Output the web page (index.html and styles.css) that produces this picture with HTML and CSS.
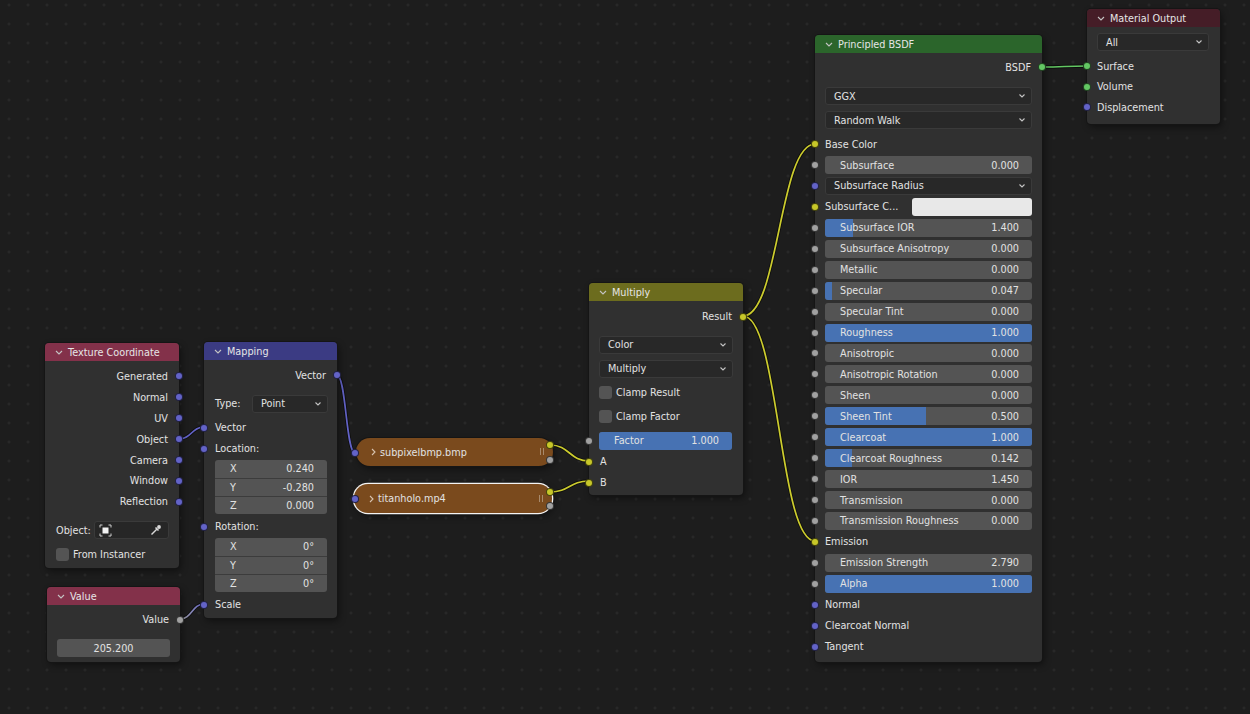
FILE: index.html
```html
<!DOCTYPE html>
<html>
<head>
    <title>Shader Editor</title>
    <meta charset="utf-8">
    <link rel="stylesheet" href="styles.css">
</head>
<body>
<div class="editor">

    <!-- links between sockets -->
    <svg class="wires" width="1250" height="714" viewBox="0 0 1250 714">
        <defs>
            <linearGradient id="grey2vec" gradientUnits="userSpaceOnUse" x1="180" y1="0" x2="204" y2="0">
                <stop offset="0" stop-color="#a1a1a1"/>
                <stop offset="1" stop-color="#6363c7"/>
            </linearGradient>
        </defs>
        <g class="shade">
            <path d="M179 439 C191.5 439 191.5 427 204 427"/>
            <path d="M180 619 C192 619 192 604 204 604"/>
            <path d="M337 375 C346 375 346 453 355 453"/>
            <path d="M550 445 C569.5 445 569.5 461 589 461"/>
            <path d="M550 492 C569.5 492 569.5 481 589 481"/>
            <path d="M743 316 C779 316 779 144 815 144"/>
            <path d="M743 316 C779 316 779 541 815 541"/>
            <path d="M1042 67 C1064.5 67 1064.5 66 1087 66"/>
        </g>
        <g class="link">
            <path class="w-vec" d="M179 439 C191.5 439 191.5 427 204 427"/>
            <path stroke="url(#grey2vec)" d="M180 619 C192 619 192 604 204 604"/>
            <path class="w-vec" d="M337 375 C346 375 346 453 355 453"/>
            <path class="w-col" d="M550 445 C569.5 445 569.5 461 589 461"/>
            <path class="w-col" d="M550 492 C569.5 492 569.5 481 589 481"/>
            <path class="w-col" d="M743 316 C779 316 779 144 815 144"/>
            <path class="w-col" d="M743 316 C779 316 779 541 815 541"/>
            <path class="w-shader" d="M1042 67 C1064.5 67 1064.5 66 1087 66"/>
        </g>
    </svg>

    <!-- Texture Coordinate -->
    <div class="node n-texcoord">
        <div class="hdr h-input"><svg class="chev" width="8" height="5" viewBox="0 0 8 5"><path d="M1 1l3 3 3-3"/></svg>Texture Coordinate</div>
        <div class="body">
            <div class="row out">Generated<i class="sock vec r"></i></div>
            <div class="row out">Normal<i class="sock vec r"></i></div>
            <div class="row out">UV<i class="sock vec r"></i></div>
            <div class="row out">Object<i class="sock vec r"></i></div>
            <div class="row out">Camera<i class="sock vec r"></i></div>
            <div class="row out">Window<i class="sock vec r"></i></div>
            <div class="row out">Reflection<i class="sock vec r"></i></div>
            <div class="row tall obj-row">
                <span class="obj-lbl">Object:</span>
                <div class="objfield">
                    <svg width="13" height="13" viewBox="0 0 13 13"><rect x="3.5" y="3.5" width="6" height="6" fill="#f2f2f2"/><path d="M1 3.5V1h2.5M9.5 1H12v2.5M12 9.5V12H9.5M3.5 12H1V9.5" stroke="#cfcfcf" fill="none"/></svg>
                    <svg width="12" height="12" viewBox="0 0 12 12"><path d="M1.5 10.5L7 5" stroke="#d8d8d8" stroke-width="1.4" fill="none"/><path d="M5.5 3.5l3 3" stroke="#d8d8d8" stroke-width="1.6"/><circle cx="9" cy="3" r="1.9" fill="#d8d8d8"/></svg>
                </div>
            </div>
            <div class="row tall"><span class="check"></span>From Instancer</div>
        </div>
    </div>

    <!-- Value -->
    <div class="node n-value">
        <div class="hdr h-input"><svg class="chev" width="8" height="5" viewBox="0 0 8 5"><path d="M1 1l3 3 3-3"/></svg>Value</div>
        <div class="body">
            <div class="row out">Value<i class="sock float r"></i></div>
            <div class="row tall value-row"><div class="field centered">205.200</div></div>
        </div>
    </div>

    <!-- Mapping -->
    <div class="node n-mapping">
        <div class="hdr h-vector"><svg class="chev" width="8" height="5" viewBox="0 0 8 5"><path d="M1 1l3 3 3-3"/></svg>Mapping</div>
        <div class="body">
            <div class="row out">Vector<i class="sock vec r"></i></div>
            <div class="row tall type-row">
                <span class="type-lbl">Type:</span>
                <div class="menu">Point<svg class="dd" width="6" height="4" viewBox="0 0 6 4"><path d="M0.5 0.5l2.5 2.5 2.5-2.5"/></svg></div>
            </div>
            <div class="row in vec-in">Vector<i class="sock vec l"></i></div>
            <div class="row in">Location:<i class="sock vec l"></i></div>
            <div class="xyz">
                <div class="field"><span>X</span><span>0.240</span></div>
                <div class="field"><span>Y</span><span>-0.280</span></div>
                <div class="field"><span>Z</span><span>0.000</span></div>
            </div>
            <div class="row in gap-top">Rotation:<i class="sock vec l"></i></div>
            <div class="xyz">
                <div class="field"><span>X</span><span>0°</span></div>
                <div class="field"><span>Y</span><span>0°</span></div>
                <div class="field"><span>Z</span><span>0°</span></div>
            </div>
            <div class="row in gap-top">Scale<i class="sock vec l"></i></div>
        </div>
    </div>

    <!-- collapsed image textures -->
    <div class="node pill n-img1">
        <svg class="chev-r" width="5" height="8" viewBox="0 0 5 8"><path d="M1 1l3 3-3 3"/></svg>
        <span>subpixelbmp.bmp</span>
        <span class="grip"></span>
        <i class="sock vec in-s"></i>
        <i class="sock col out-a"></i>
        <i class="sock float out-b"></i>
    </div>
    <div class="node pill selected n-img2">
        <svg class="chev-r" width="5" height="8" viewBox="0 0 5 8"><path d="M1 1l3 3-3 3"/></svg>
        <span>titanholo.mp4</span>
        <span class="grip"></span>
        <i class="sock vec in-s"></i>
        <i class="sock col out-a"></i>
        <i class="sock float out-b"></i>
    </div>

    <!-- Multiply -->
    <div class="node n-mix">
        <div class="hdr h-color"><svg class="chev" width="8" height="5" viewBox="0 0 8 5"><path d="M1 1l3 3 3-3"/></svg>Multiply</div>
        <div class="body">
            <div class="row out">Result<i class="sock col r"></i></div>
            <div class="row tall menu-first"><div class="menu">Color<svg class="dd" width="6" height="4" viewBox="0 0 6 4"><path d="M0.5 0.5l2.5 2.5 2.5-2.5"/></svg></div></div>
            <div class="row tall"><div class="menu">Multiply<svg class="dd" width="6" height="4" viewBox="0 0 6 4"><path d="M0.5 0.5l2.5 2.5 2.5-2.5"/></svg></div></div>
            <div class="row tall"><span class="check"></span>Clamp Result</div>
            <div class="row tall"><span class="check"></span>Clamp Factor</div>
            <div class="row factor-row"><div class="field"><b class="fill" style="width:100%"></b><span>Factor</span><span>1.000</span></div><i class="sock float l"></i></div>
            <div class="row in">A<i class="sock col l"></i></div>
            <div class="row in">B<i class="sock col l"></i></div>
        </div>
    </div>

    <!-- Principled BSDF -->
    <div class="node n-bsdf">
        <div class="hdr h-shader"><svg class="chev" width="8" height="5" viewBox="0 0 8 5"><path d="M1 1l3 3 3-3"/></svg>Principled BSDF</div>
        <div class="body">
            <div class="row out">BSDF<i class="sock shader r"></i></div>
            <div class="row tall menu-first"><div class="menu">GGX<svg class="dd" width="6" height="4" viewBox="0 0 6 4"><path d="M0.5 0.5l2.5 2.5 2.5-2.5"/></svg></div></div>
            <div class="row tall"><div class="menu">Random Walk<svg class="dd" width="6" height="4" viewBox="0 0 6 4"><path d="M0.5 0.5l2.5 2.5 2.5-2.5"/></svg></div></div>
            <div class="row in base-row">Base Color<i class="sock col l"></i></div>
            <div class="row"><div class="field"><span>Subsurface</span><span>0.000</span></div><i class="sock float l"></i></div>
            <div class="row"><div class="menu">Subsurface Radius<svg class="dd" width="6" height="4" viewBox="0 0 6 4"><path d="M0.5 0.5l2.5 2.5 2.5-2.5"/></svg></div><i class="sock vec l"></i></div>
            <div class="row in"><span class="swatch-lbl">Subsurface C...</span><div class="swatch"></div><i class="sock col l"></i></div>
            <div class="row"><div class="field"><b class="fill" style="width:13.5%"></b><span>Subsurface IOR</span><span>1.400</span></div><i class="sock float l"></i></div>
            <div class="row"><div class="field"><span>Subsurface Anisotropy</span><span>0.000</span></div><i class="sock float l"></i></div>
            <div class="row"><div class="field"><span>Metallic</span><span>0.000</span></div><i class="sock float l"></i></div>
            <div class="row"><div class="field"><b class="fill" style="width:3.5%"></b><span>Specular</span><span>0.047</span></div><i class="sock float l"></i></div>
            <div class="row"><div class="field"><span>Specular Tint</span><span>0.000</span></div><i class="sock float l"></i></div>
            <div class="row"><div class="field"><b class="fill" style="width:100%"></b><span>Roughness</span><span>1.000</span></div><i class="sock float l"></i></div>
            <div class="row"><div class="field"><span>Anisotropic</span><span>0.000</span></div><i class="sock float l"></i></div>
            <div class="row"><div class="field"><span>Anisotropic Rotation</span><span>0.000</span></div><i class="sock float l"></i></div>
            <div class="row"><div class="field"><span>Sheen</span><span>0.000</span></div><i class="sock float l"></i></div>
            <div class="row"><div class="field"><b class="fill" style="width:49%"></b><span>Sheen Tint</span><span>0.500</span></div><i class="sock float l"></i></div>
            <div class="row"><div class="field"><b class="fill" style="width:100%"></b><span>Clearcoat</span><span>1.000</span></div><i class="sock float l"></i></div>
            <div class="row"><div class="field"><b class="fill" style="width:13%"></b><span>Clearcoat Roughness</span><span>0.142</span></div><i class="sock float l"></i></div>
            <div class="row"><div class="field"><span>IOR</span><span>1.450</span></div><i class="sock float l"></i></div>
            <div class="row"><div class="field"><span>Transmission</span><span>0.000</span></div><i class="sock float l"></i></div>
            <div class="row"><div class="field"><span>Transmission Roughness</span><span>0.000</span></div><i class="sock float l"></i></div>
            <div class="row in">Emission<i class="sock col l"></i></div>
            <div class="row"><div class="field"><span>Emission Strength</span><span>2.790</span></div><i class="sock float l"></i></div>
            <div class="row"><div class="field"><b class="fill" style="width:100%"></b><span>Alpha</span><span>1.000</span></div><i class="sock float l"></i></div>
            <div class="row in">Normal<i class="sock vec l"></i></div>
            <div class="row in">Clearcoat Normal<i class="sock vec l"></i></div>
            <div class="row in">Tangent<i class="sock vec l"></i></div>
        </div>
    </div>

    <!-- Material Output -->
    <div class="node n-output">
        <div class="hdr h-output"><svg class="chev" width="8" height="5" viewBox="0 0 8 5"><path d="M1 1l3 3 3-3"/></svg>Material Output</div>
        <div class="body">
            <div class="row tall"><div class="menu">All<svg class="dd" width="6" height="4" viewBox="0 0 6 4"><path d="M0.5 0.5l2.5 2.5 2.5-2.5"/></svg></div></div>
            <div class="row in out-row first">Surface<i class="sock shader l"></i></div>
            <div class="row in out-row">Volume<i class="sock shader l"></i></div>
            <div class="row in out-row">Displacement<i class="sock vec l"></i></div>
        </div>
    </div>

</div>
</body>
</html>
```

FILE: styles.css
```css
:root {
    --body: #303030;
    --field: #545454;
    --menu: #282828;
    --slider: #4772b3;
    --text: #e2e2e2;
}

body {
    margin: 0;
    background-color: #1d1d1d;
    color: var(--text);
    font-family: "DejaVu Sans", sans-serif;
    font-size: 9.7px;
}

.editor {
    position: relative;
    width: 1250px;
    height: 714px;
    overflow: hidden;
    background-color: #1d1d1d;
    background-image: radial-gradient(circle, #2d2d2d 0.9px, transparent 1.5px);
    background-size: 19px 19px;
    background-position: -0.5px -4.5px;
}

/* wires */
.wires {
    position: absolute;
    left: 0;
    top: 0;
}
.wires path {
    fill: none;
}
.shade path {
    stroke: rgba(0, 0, 0, 0.55);
    stroke-width: 3.4;
}
.link path {
    stroke-width: 1.7;
}
.w-vec { stroke: #6363c7; }
.w-col { stroke: #cccc2e; }
.w-shader { stroke: #63c763; }

/* nodes */
.node {
    position: absolute;
    display: flex;
    flex-direction: column;
    background: var(--body);
    border-radius: 4px;
    box-shadow: 0 0 0 1px #151515, 2px 3px 7px rgba(0, 0, 0, 0.45);
}
.hdr {
    flex: none;
    height: 18px;
    display: flex;
    align-items: center;
    gap: 5px;
    padding-left: 10px;
    border-radius: 4px 4px 0 0;
    color: #e6e6e6;
}
.chev path, .chev-r path, .dd path {
    fill: none;
    stroke: #c4c4c4;
    stroke-width: 1.1;
}
.h-input { background: #83314a; }
.h-vector { background: #3b3b83; }
.h-color { background: #6c6c1e; }
.h-shader { background: #2b652b; }
.h-output { background: #451d27; }

.body {
    display: flex;
    flex-direction: column;
}

.row {
    position: relative;
    flex: none;
    height: 20.9px;
    display: flex;
    align-items: center;
    padding: 0 10px;
}
.row.tall {
    height: 24px;
}
.row.out {
    justify-content: flex-end;
    padding-right: 11px;
}
.row.in {
    padding-left: 11px;
}

/* sockets */
.sock {
    position: absolute;
    top: 50%;
    width: 6px;
    height: 6px;
    margin-top: -4px;
    border-radius: 50%;
    border: 1px solid rgba(0, 0, 0, 0.65);
}
.sock.r { right: -4px; }
.sock.l { left: -4px; }
.vec { background: #6363c7; }
.float { background: #a1a1a1; }
.col { background: #c7c729; }
.shader { background: #63c763; }

/* widgets */
.field {
    position: relative;
    flex: 1;
    height: 18px;
    display: flex;
    align-items: center;
    justify-content: space-between;
    padding: 0 13px 0 15px;
    background: var(--field);
    border-radius: 3px;
    overflow: hidden;
}
.field span {
    position: relative;
}
.field.centered {
    justify-content: center;
    padding: 0;
}
.fill {
    position: absolute;
    left: 0;
    top: 0;
    bottom: 0;
    background: var(--slider);
}
.menu {
    flex: 1;
    height: 18px;
    box-sizing: border-box;
    display: flex;
    align-items: center;
    justify-content: space-between;
    padding: 0 6px 0 8px;
    background: var(--menu);
    border: 1px solid #3a3a3a;
    border-radius: 3px;
}
.check {
    width: 13px;
    height: 13px;
    margin-right: 4px;
    background: var(--field);
    border-radius: 3px;
}

/* Texture Coordinate */
.n-texcoord { left: 45px; top: 343px; width: 134px; height: 225px; }
.n-texcoord .body { padding-top: 5px; }
.n-texcoord .obj-row {
    margin-top: 6px;
    padding-left: 11px;
}
.n-texcoord .row.tall:last-child { padding-left: 11px; }
.obj-lbl { width: 38px; }
.objfield {
    flex: 1;
    height: 18px;
    box-sizing: border-box;
    display: flex;
    align-items: center;
    justify-content: space-between;
    padding: 0 6px 0 4px;
    background: #262626;
    border: 1px solid #3a3a3a;
    border-radius: 3px;
}

/* Value */
.n-value { left: 47px; top: 587px; width: 133px; height: 75px; }
.n-value .body { padding-top: 4.5px; }
.value-row { margin-top: 6px; }

/* Mapping */
.n-mapping { left: 204px; top: 342px; width: 133px; height: 276px; }
.n-mapping .body { padding-top: 5px; }
.type-row {
    margin-top: 6px;
    padding: 0 9px 0 11px;
}
.type-lbl { width: 37px; }
.vec-in { margin-top: 1.5px; }
.xyz {
    display: flex;
    flex-direction: column;
    margin: 0.5px 10px 0 11px;
    border-radius: 3px;
    overflow: hidden;
}
.xyz .field {
    flex: none;
    border-radius: 0;
}
.xyz .field + .field {
    border-top: 1px solid #3c3c3c;
    height: 17px;
}
.gap-top { margin-top: 2.5px; }

/* collapsed image nodes */
.pill {
    flex-direction: row;
    align-items: center;
    gap: 4px;
    padding-left: 15px;
    border-radius: 14px;
    background: #7a4a1d;
    box-sizing: border-box;
}
.pill.selected {
    box-shadow: 0 0 0 1.3px #f4f4f4, 2px 3px 7px rgba(0, 0, 0, 0.45);
}
.chev-r path { stroke: #d8c4b0; }
.grip {
    position: absolute;
    right: 9px;
    top: 50%;
    width: 1px;
    height: 7px;
    margin-top: -4px;
    border-left: 1px solid #a88a6c;
    border-right: 1px solid #a88a6c;
    padding-left: 1px;
}
.pill .sock { margin-top: 0; }
.n-img1 { left: 356px; top: 438px; width: 197px; height: 28px; }
.n-img2 { left: 354px; top: 484px; width: 198px; height: 29px; }
.n-img1 .in-s { left: -5px; top: 11px; }
.n-img1 .out-a { right: -1px; top: 3px; }
.n-img1 .out-b { right: -1px; top: 18px; }
.n-img2 .in-s { left: -3px; top: 11px; }
.n-img2 .out-a { right: -2px; top: 4px; }
.n-img2 .out-b { right: -2px; top: 18px; }

/* Multiply */
.n-mix { left: 589px; top: 283px; width: 154px; height: 212px; }
.n-mix .body { padding-top: 5.5px; }
.menu-first { margin-top: 5.5px; }
.factor-row { margin-top: 1.5px; padding-right: 11px; }

/* Principled BSDF */
.n-bsdf { left: 815px; top: 35px; width: 227px; height: 627px; }
.n-bsdf .body { padding-top: 3.5px; }
.n-bsdf .row { height: 20.95px; }
.n-bsdf .row.out { height: 21px; }
.n-bsdf .row.tall { height: 24px; }
.n-bsdf .menu-first { margin-top: 6.5px; }
.base-row { margin-top: 1.6px; }
.n-bsdf .row.in { padding-left: 10px; }
.swatch-lbl { width: 87px; }
.swatch {
    flex: 1;
    height: 18px;
    background: #e8e8e8;
    border-radius: 3px;
}

/* Material Output */
.n-output { left: 1087px; top: 9px; width: 133px; height: 115px; }
.n-output .body { padding-top: 3px; }
.n-output .row.tall { padding-right: 11px; }
.out-row { height: 20.5px; }
.out-row.first { margin-top: 1.75px; }
.n-output .row.in { padding-left: 10px; }
```
